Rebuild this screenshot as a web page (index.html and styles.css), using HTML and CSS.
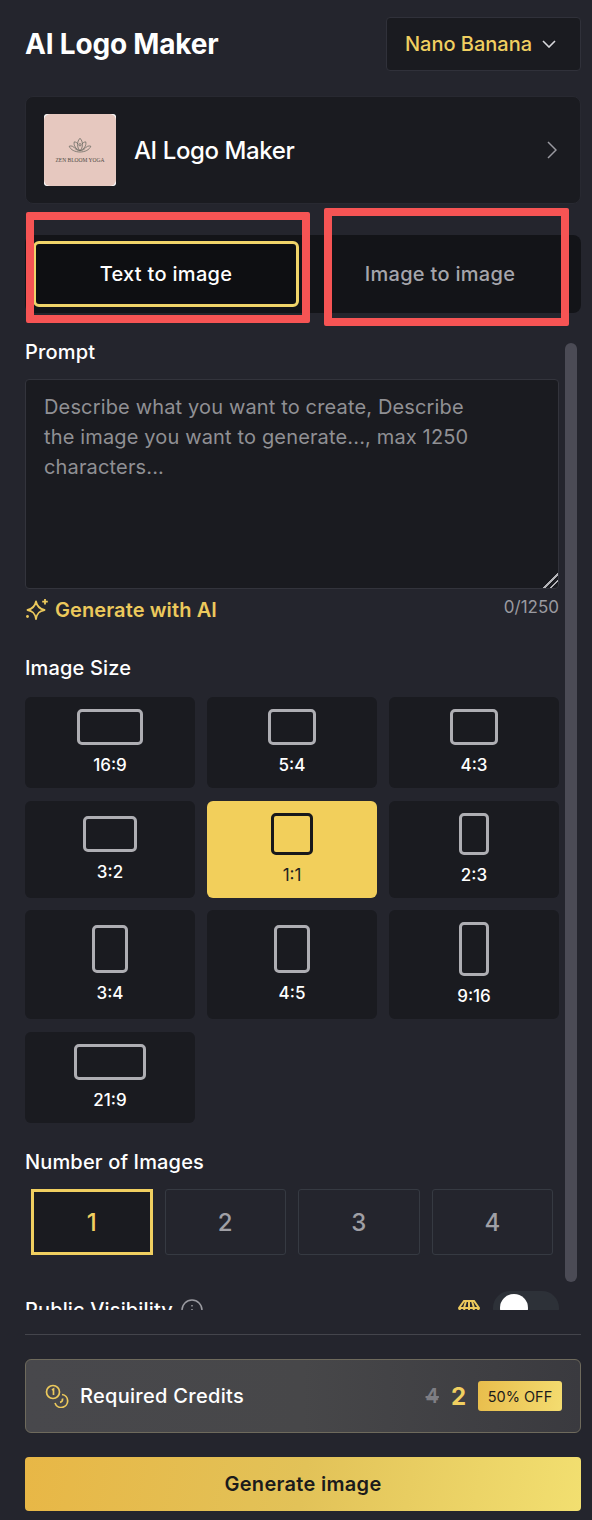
FILE: index.html
```html
<!DOCTYPE html>
<html lang="en">
<head>
  <meta charset="UTF-8">
  <title>AI Logo Maker</title>
  <meta name="viewport" content="width=device-width, initial-scale=1">
  <link rel="stylesheet" href="styles.css">
</head>
<body>
  <div class="panel">
    <div class="header">
      <h1>AI Logo Maker</h1>
      <div class="model-select">
        <span>Nano Banana</span>
        <svg class="chevron" viewBox="0 0 14 8"><path d="M1 1l6 6 6-6"/></svg>
      </div>
    </div>

    <div class="tool-card">
      <div class="thumb">
        <div class="thumb-art">
          <svg class="lotus" viewBox="0 0 36 22">
            <path d="M18 1c3 3 4 7 3 12-1 3-2 4-3 5-1-1-2-2-3-5-1-5 0-9 3-12z"/>
            <path d="M10 6c2 0 4 1 5 3M26 6c-2 0-4 1-5 3M10 6c-1 5 2 10 8 12 6-2 9-7 8-12"/>
            <path d="M3 12c3-1 6 0 8 3 2 2 4 3 7 3s5-1 7-3c2-3 5-4 8-3-2 5-8 8-15 8S5 17 3 12z"/>
            <circle cx="18" cy="10" r="1.6"/>
          </svg>
          <span class="thumb-text">ZEN BLOOM YOGA</span>
        </div>
      </div>
      <span class="tool-name">AI Logo Maker</span>
      <svg class="arrow" viewBox="0 0 10 18"><path d="M1 1l8 8-8 8"/></svg>
    </div>

    <div class="tabs">
      <div class="tab active">Text to image</div>
      <div class="tab">Image to image</div>
    </div>

    <div class="scroll">
      <div class="scroll-thumb"></div>

      <div class="label prompt-label">Prompt</div>
      <textarea class="prompt" placeholder="Describe what you want to create, Describe the image you want to generate..., max 1250 characters..."></textarea>
      <div class="prompt-foot">
        <div class="ai-link">
          <svg class="sparkle" viewBox="0 0 24 24">
            <path d="M11 3.500c1 5 3.200 7.300 8.500 8.500-5.300 1-7.500 3.300-8.500 9-1-5.700-3.200-8-8.500-9 5.300-1.200 7.500-3.500 8.500-8.500z"/>
            <path d="M20 1v5.500M17.200 3.700h5.600"/>
            <circle class="dot" cx="2.500" cy="18.500" r="1.400"/>
          </svg>
          <span>Generate with AI</span>
        </div>
        <span class="count">0/1250</span>
      </div>

      <div class="label size-label">Image Size</div>
      <div class="size-grid">
        <div class="size"><i class="ratio" style="width:66px;height:36px"></i><span>16:9</span></div>
        <div class="size"><i class="ratio" style="width:48px;height:36px"></i><span>5:4</span></div>
        <div class="size"><i class="ratio" style="width:48px;height:36px"></i><span>4:3</span></div>
        <div class="size"><i class="ratio" style="width:54px;height:36px"></i><span>3:2</span></div>
        <div class="size selected"><i class="ratio" style="width:42px;height:42px"></i><span>1:1</span></div>
        <div class="size"><i class="ratio" style="width:30px;height:42px"></i><span>2:3</span></div>
        <div class="size"><i class="ratio" style="width:36px;height:48px"></i><span>3:4</span></div>
        <div class="size"><i class="ratio" style="width:36px;height:48px"></i><span>4:5</span></div>
        <div class="size"><i class="ratio" style="width:30px;height:54px"></i><span>9:16</span></div>
        <div class="size"><i class="ratio" style="width:72px;height:36px"></i><span>21:9</span></div>
      </div>

      <div class="label number-label">Number of Images</div>
      <div class="numbers">
        <div class="number selected">1</div>
        <div class="number">2</div>
        <div class="number">3</div>
        <div class="number">4</div>
      </div>

      <div class="visibility">
        <div class="vis-left">
          <span class="label">Public Visibility</span>
          <svg class="info" viewBox="0 0 22 22">
            <circle cx="11" cy="11" r="10"/>
            <path d="M11 10v6M11 6v1.500"/>
          </svg>
        </div>
        <div class="vis-right">
          <svg class="globe" viewBox="0 0 22 22">
            <path d="M6 2h10l5 7-5 11H6L1 9z"/>
            <path d="M1 9h20M8 2L6 9l2 11M14 2l2 7-2 11M11 2v18"/>
          </svg>
          <div class="switch"><div class="knob"></div></div>
        </div>
      </div>
    </div>

    <div class="footer">
      <div class="credits">
        <svg class="coins" viewBox="0 0 24 24">
          <circle cx="8" cy="8" r="6.500"/>
          <path d="M7 6l1.500-1v6"/>
          <path d="M17 10.500a6.500 6.500 0 1 1-7 8.500"/>
          <path d="M17.500 14.500c.3 2-1 3.500-2.500 3.800"/>
        </svg>
        <span class="credits-label">Required Credits</span>
        <span class="old-price">4</span>
        <span class="new-price">2</span>
        <span class="off">50% OFF</span>
      </div>
      <div class="generate">Generate image</div>
    </div>
  </div>

  <div class="mark mark-text"></div>
  <div class="mark mark-image"></div>
</body>
</html>
```

FILE: styles.css
```css
body, textarea {
  font-family: 'Inter', 'Liberation Sans', sans-serif;
}

body {
  margin: 0;
  background: #24252d;
  color: #fff;
}

.panel {
  width: 592px;
  height: 1520px;
  box-sizing: border-box;
  padding: 17px 11px 0 25px;
}

.header {
  display: flex;
  align-items: center;
  justify-content: space-between;
  height: 54px;
}

h1 {
  margin: 0;
  font-size: 28px;
  font-weight: 700;
  letter-spacing: -0.2px;
}

.model-select {
  display: flex;
  align-items: center;
  justify-content: center;
  gap: 10px;
  width: 195px;
  height: 54px;
  box-sizing: border-box;
  padding-right: 6px;
  background: #1a1b20;
  border: 1px solid #30313a;
  border-radius: 4px;
  color: #f0cf60;
  font-size: 20px;
  font-weight: 500;
}

.chevron {
  width: 14px;
  height: 8px;
  fill: none;
  stroke: #d8d8dc;
  stroke-width: 1.6;
}

.tool-card {
  display: flex;
  align-items: center;
  height: 108px;
  box-sizing: border-box;
  margin-top: 25px;
  padding: 0 23px 0 18px;
  background: #1a1b20;
  border: 1px solid #282931;
  border-radius: 8px;
}

.thumb {
  width: 72px;
  height: 72px;
  background: #fff;
  border-radius: 3px;
}

.thumb-art {
  display: flex;
  flex-direction: column;
  align-items: center;
  justify-content: center;
  height: 100%;
  background: #e6c8bf;
  border-radius: 6px;
}

.lotus {
  width: 26px;
  height: 17px;
  fill: none;
  stroke: #6a6a63;
  stroke-width: 1.1;
}

.thumb-text {
  margin-top: 3px;
  color: #4f4c46;
  font-family: 'Liberation Serif', serif;
  font-size: 5.5px;
  white-space: nowrap;
}

.tool-name {
  flex: 1;
  margin-left: 18px;
  font-size: 24px;
  font-weight: 500;
  letter-spacing: -0.4px;
}

.arrow {
  width: 10px;
  height: 18px;
  fill: none;
  stroke: #9a9aa0;
  stroke-width: 1.5;
}

.tabs {
  display: flex;
  gap: 8px;
  height: 78px;
  box-sizing: border-box;
  margin-top: 31px;
  padding: 6px 8px;
  background: #131418;
  border-radius: 8px;
}

.tab {
  display: flex;
  align-items: center;
  justify-content: center;
  flex: 1;
  box-sizing: border-box;
  border: 3px solid transparent;
  border-radius: 6px;
  color: #a5a5ab;
  font-size: 20px;
  font-weight: 500;
  letter-spacing: 0.3px;
}

.tab.active {
  background: #0e0f12;
  border-color: #f0d469;
  color: #fff;
}

.scroll {
  position: relative;
  height: 997px;
  box-sizing: border-box;
  padding: 27px 22px 0 0;
  overflow: hidden;
}

.scroll-thumb {
  position: absolute;
  top: 30px;
  right: 4px;
  width: 12px;
  height: 939px;
  background: #4b4b55;
  border-radius: 6px;
}

.label {
  height: 24px;
  color: #fff;
  font-size: 20px;
  font-weight: 500;
  line-height: 24px;
  letter-spacing: 0.15px;
}

.prompt {
  display: block;
  width: 100%;
  height: 210px;
  box-sizing: border-box;
  margin-top: 15px;
  padding: 12px 64px 13px 18px;
  background: #1a1b20;
  border: 1px solid #33343c;
  border-radius: 4px;
  color: #fff;
  font-size: 20px;
  line-height: 30px;
  letter-spacing: 0.15px;
  color-scheme: dark;
  outline: none;
}

.prompt::placeholder {
  color: #909094;
  opacity: 1;
}

.prompt::-webkit-resizer {
  background: linear-gradient(135deg, transparent 50%, #b4b4b8 50%, #b4b4b8 57%, transparent 57%, transparent 73%, #b4b4b8 73%, #b4b4b8 80%, transparent 80%);
}

.prompt-foot {
  display: flex;
  justify-content: space-between;
  height: 26px;
  margin-top: 8px;
}

.ai-link {
  display: flex;
  align-items: center;
  gap: 6px;
  color: #ecc95c;
  font-size: 20px;
  font-weight: 600;
  letter-spacing: 0.1px;
}

.sparkle {
  width: 24px;
  height: 24px;
  fill: none;
  stroke: #ecc95c;
  stroke-width: 1.8;
  stroke-linejoin: round;
}

.sparkle .dot {
  fill: #ecc95c;
  stroke: none;
}

.count {
  color: #9a9aa0;
  font-size: 17px;
  line-height: 20px;
}

.size-label {
  margin-top: 33px;
}

.size-grid {
  display: grid;
  grid-template-columns: repeat(3, 170px);
  gap: 12.5px 12px;
  margin-top: 17px;
}

.size {
  display: flex;
  flex-direction: column;
  align-items: center;
  justify-content: center;
  gap: 10px;
  padding: 12px 0 13px;
  background: #1a1b20;
  border-radius: 6px;
  font-size: 17px;
  font-weight: 500;
  line-height: 20px;
}

.ratio {
  display: block;
  box-sizing: border-box;
  border: 3px solid #aeaeb3;
  border-radius: 5px;
}

.size.selected {
  background: #f2cf5b;
  color: #1f1f1f;
  font-weight: 400;
}

.size.selected .ratio {
  border-color: #17181b;
}

.number-label {
  margin-top: 27.5px;
}

.numbers {
  display: grid;
  grid-template-columns: repeat(4, 1fr);
  gap: 12px;
  margin-top: 15px;
  padding: 0 6px;
}

.number {
  display: flex;
  align-items: center;
  justify-content: center;
  height: 66px;
  box-sizing: border-box;
  border: 1px solid #363a42;
  border-radius: 3px;
  color: #a0a0a6;
  font-size: 24px;
  font-weight: 500;
}

.number.selected {
  border: 3px solid #f0cf60;
  border-radius: 0;
  background: #1a1b20;
  color: #f0cf60;
}

.visibility {
  display: flex;
  align-items: flex-start;
  justify-content: space-between;
  margin-top: 36px;
}

.vis-left {
  display: flex;
  align-items: center;
  gap: 8px;
  padding-top: 7px;
}

.info {
  width: 22px;
  height: 22px;
  fill: none;
  stroke: #9a9aa0;
  stroke-width: 1.5;
}

.vis-right {
  display: flex;
  align-items: flex-start;
  gap: 13px;
}

.globe {
  width: 22px;
  height: 22px;
  margin-top: 8px;
  fill: none;
  stroke: #ecc95c;
  stroke-width: 2;
}

.switch {
  width: 66px;
  height: 34px;
  background: #2d3138;
  border-radius: 17px;
}

.knob {
  width: 28px;
  height: 28px;
  margin: 3px 0 0 7px;
  background: #fff;
  border-radius: 50%;
}

.footer {
  margin-top: 24px;
  padding-top: 24px;
  border-top: 1px solid #44454c;
}

.credits {
  display: flex;
  align-items: center;
  height: 74px;
  box-sizing: border-box;
  padding: 0 18px 0 19px;
  background: linear-gradient(90deg, #48484c 0%, #474749 50%, #3a3a3f 100%);
  border: 1px solid #6e6a5c;
  border-radius: 6px;
}

.coins {
  width: 24px;
  height: 24px;
  fill: none;
  stroke: #ecc95c;
  stroke-width: 1.7;
}

.credits-label {
  flex: 1;
  margin-left: 11px;
  font-size: 20px;
  font-weight: 500;
  letter-spacing: 0.3px;
}

.old-price {
  color: #7e7e84;
  font-size: 20px;
  font-weight: 600;
  text-decoration: line-through;
}

.new-price {
  margin-left: 12px;
  color: #f0cf60;
  font-size: 24px;
  font-weight: 700;
}

.off {
  display: flex;
  align-items: center;
  justify-content: center;
  width: 84px;
  height: 30px;
  margin-left: 12px;
  background: linear-gradient(100deg, #e8bd4c 0%, #f4dc70 100%);
  border-radius: 3px;
  color: #1b1b1b;
  font-size: 14.5px;
  font-weight: 400;
}

.generate {
  display: flex;
  align-items: center;
  justify-content: center;
  height: 54px;
  margin-top: 24px;
  background: linear-gradient(100deg, #e8b746 0%, #e2c258 50%, #f2df70 100%);
  border-radius: 4px;
  color: #1b1b1b;
  font-size: 20px;
  font-weight: 600;
  letter-spacing: 0.3px;
}

/* red annotation boxes drawn over the tabs */
.mark {
  position: absolute;
  box-sizing: border-box;
  border: 8px solid #f65454;
  border-radius: 2px;
}

.mark-text {
  top: 212px;
  left: 26px;
  width: 284px;
  height: 111px;
}

.mark-image {
  top: 208px;
  left: 324px;
  width: 245px;
  height: 118px;
}
```
